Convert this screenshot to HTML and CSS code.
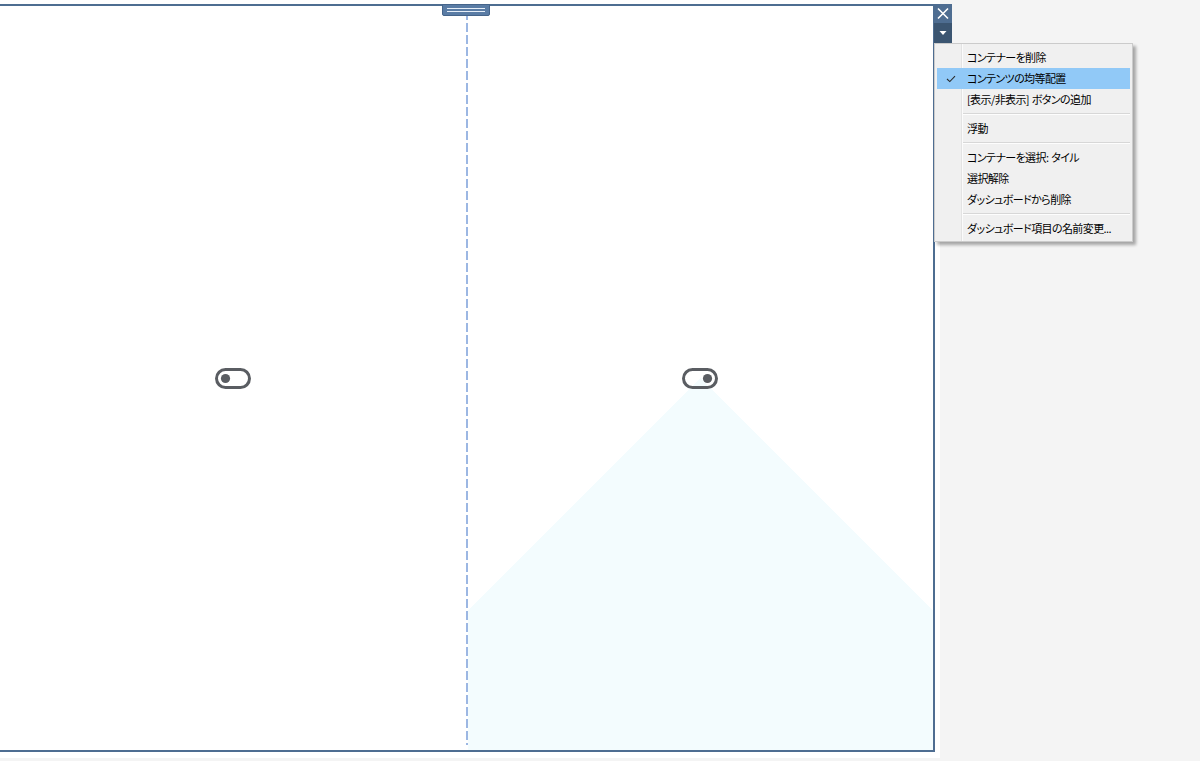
FILE: index.html
```html
<!DOCTYPE html>
<html lang="ja">
<head>
<meta charset="utf-8">
<link rel="stylesheet" href="styles.css">
</head>
<body>
<div class="canvas">
  <div class="box">
    <div class="pane">
      <svg class="toggle" width="36" height="21" viewBox="0 0 36 21"><rect x="1.5" y="1.5" width="33" height="18" rx="9" fill="none" stroke="#5a5d62" stroke-width="3"/><circle cx="10.5" cy="10.5" r="4.6" fill="#5a5d62"/></svg>
    </div>
    <div class="divider"></div>
    <div class="pane pane-right">
      <svg class="toggle" width="36" height="21" viewBox="0 0 36 21"><rect x="1.5" y="1.5" width="33" height="18" rx="9" fill="none" stroke="#5a5d62" stroke-width="3"/><circle cx="25.5" cy="10.5" r="4.6" fill="#5a5d62"/></svg>
    </div>
    <div class="handle"><span></span><span></span></div>
  </div>
  <div class="ctrls">
    <div class="btn-close"><svg width="18" height="19" viewBox="0 0 18 19"><path d="M4 4.5 L14 14.5 M14 4.5 L4 14.5" stroke="#fff" stroke-width="1.6"/></svg></div>
    <div class="btn-drop"><svg width="18" height="20" viewBox="0 0 18 20"><path d="M5.5 8 L12.5 8 L9 12 Z" fill="#fff"/></svg></div>
  </div>
  <div class="menu">
    <div class="item">コンテナーを削除</div>
    <div class="item checked"><svg class="check" width="10" height="8" viewBox="0 0 10 8"><path d="M1 4 L3.8 6.6 L9 1.2" fill="none" stroke="#2a2a2a" stroke-width="1.1"/></svg>コンテンツの均等配置</div>
    <div class="item">[表示/非表示] ボタンの追加</div>
    <div class="sep"></div>
    <div class="item">浮動</div>
    <div class="sep"></div>
    <div class="item">コンテナーを選択: タイル</div>
    <div class="item">選択解除</div>
    <div class="item">ダッシュボードから削除</div>
    <div class="sep"></div>
    <div class="item">ダッシュボード項目の名前変更...</div>
  </div>
</div>
</body>
</html>
```
FILE: styles.css
```css
html, body {
  margin: 0;
  padding: 0;
  background: #f4f4f4;
}
body {
  font-family: "Noto Sans CJK JP", "Noto Sans", sans-serif;
}
.canvas {
  position: relative;
  width: 940px;
  height: 758px;
  background: #ffffff;
  padding-top: 4px;
  box-sizing: border-box;
}
.box {
  position: relative;
  margin-left: -2px;
  width: 935px;
  height: 744px;
  border: 2px solid #4e6d91;
  border-left-width: 0;
  display: flex;
  background: #fff;
}
.pane {
  flex: 1;
  display: flex;
  align-items: center;
  justify-content: center;
}
.pane:first-child {
  padding-left: 2px;
}
.pane-right {
  background: conic-gradient(from 135deg at 50% 50%, #f3fcfe 0deg 90deg, transparent 90deg 360deg);
}
.toggle {
  display: block;
}
.divider {
  width: 2px;
  margin: 5px 0;
  background: repeating-linear-gradient(to bottom, #9cb7e3 0 9px, transparent 9px 12px);
}
.handle {
  position: absolute;
  top: -2px;
  left: 444px;
  width: 48px;
  height: 12px;
  box-sizing: border-box;
  background: #5a7ca5;
  border: 1px solid #45648a;
  border-radius: 0 0 2px 2px;
  display: flex;
  flex-direction: column;
  justify-content: center;
  gap: 2px;
  padding: 0 4px;
}
.handle span {
  display: block;
  height: 1px;
  background: #e6eef8;
}
.ctrls {
  position: absolute;
  left: 934px;
  top: 4px;
  width: 18px;
  display: flex;
  flex-direction: column;
}
.btn-close {
  height: 19px;
  background: #4e6d91;
}
.btn-drop {
  height: 20px;
  background: #3b5571;
}
.ctrls svg {
  display: block;
}
.menu {
  position: absolute;
  left: 934px;
  top: 43px;
  width: 199px;
  box-sizing: border-box;
  padding: 3px 2px 2px;
  background:
    linear-gradient(to right, transparent 26px, #e3e3e3 26px 27px, #fbfbfb 27px 28px, transparent 28px),
    #f0f0f0;
  border: 1px solid #cbcbcb;
  box-shadow: 3px 3px 3px rgba(0, 0, 0, 0.32);
}
.item {
  position: relative;
  height: 21px;
  line-height: 21px;
  padding-left: 30px;
  font-size: 11px;
  letter-spacing: -0.6px;
  word-spacing: 1px;
  color: #000;
  font-feature-settings: "palt";
  white-space: nowrap;
}
.item.checked {
  background: #91c9f7;
}
.check {
  position: absolute;
  left: 9px;
  top: 7px;
}
.sep {
  height: 1px;
  margin: 3px 0 3px 26px;
  background: #d7d7d7;
  border-bottom: 1px solid #fdfdfd;
}
```
